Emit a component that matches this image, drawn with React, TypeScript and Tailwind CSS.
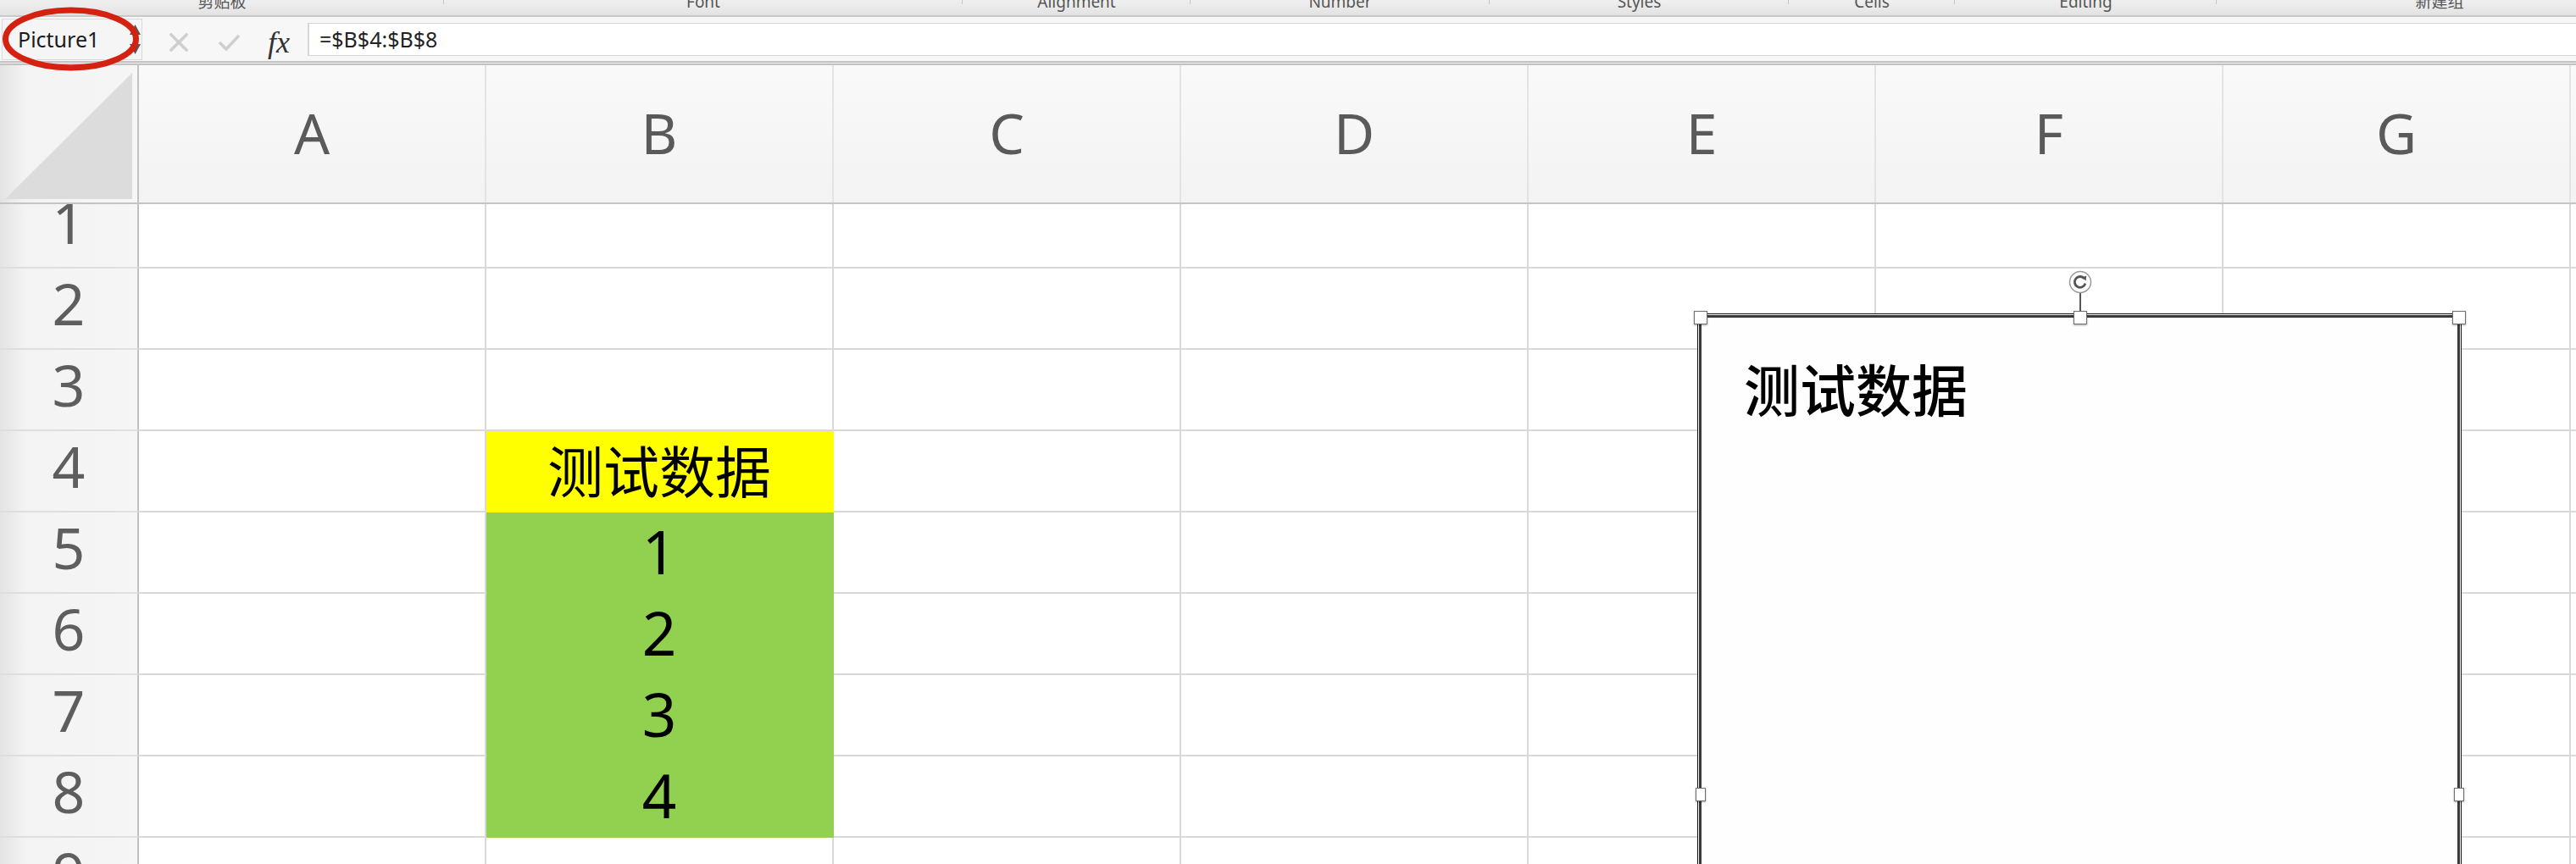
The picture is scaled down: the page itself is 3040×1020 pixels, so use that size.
import React from 'react';

const SANS = "font-['Noto_Sans','Noto_Sans_CJK_SC',sans-serif]";

const RIBBON_GROUPS = [
  { label: '剪贴板', width: 'w-[524px]' },
  { label: 'Font', width: 'w-[612px]' },
  { label: 'Alignment', width: 'w-[269px]' },
  { label: 'Number', width: 'w-[353px]' },
  { label: 'Styles', width: 'w-[353px]' },
  { label: 'Cells', width: 'w-[196px]' },
  { label: 'Editing', width: 'w-[309px]' },
  { label: '新建组', width: 'w-[526px]' },
];

const COLS = ['A', 'B', 'C', 'D', 'E', 'F', 'G', 'H'];

type Fill = { bg: string; text: string; size: string };

// only column B carries data
const CELLS: Record<number, Fill> = {
  4: { bg: 'bg-[#ffff00] border-[#ffff00]', text: '测试数据', size: 'text-[66px]' },
  5: { bg: 'bg-[#92d050] border-[#92d050] pb-[4px]', text: '1', size: 'text-[71px]' },
  6: { bg: 'bg-[#92d050] border-[#92d050] pb-[4px]', text: '2', size: 'text-[71px]' },
  7: { bg: 'bg-[#92d050] border-[#92d050] pb-[4px]', text: '3', size: 'text-[71px]' },
  8: { bg: 'bg-[#92d050] border-[#92d050] pb-[4px]', text: '4', size: 'text-[71px]' },
};

function Ribbon() {
  return (
    <div className="flex h-[18px] overflow-hidden bg-[linear-gradient(#efefef,#e3e3e3)]">
      {RIBBON_GROUPS.map((g, i) => (
        <div key={g.label} className={`relative flex shrink-0 justify-center ${g.width}`}>
          <span className="-mt-[7px] text-[19px] leading-[19px] text-[#555]">{g.label}</span>
          {i < RIBBON_GROUPS.length - 1 && (
            <span className="absolute right-0 top-0 h-[5px] w-px bg-[#c4c4c4]" />
          )}
        </div>
      ))}
    </div>
  );
}

function FormulaBar() {
  return (
    <div className="relative">
      <div className="h-[2px] bg-[#c9c9c9]" />
      <div className="flex h-[52px] items-start bg-[#f7f7f7]">
        <div className="ml-[2px] mt-[2px] flex h-[49px] w-[166px] shrink-0 items-center border border-[#dadada] bg-[#f5f5f5]">
          <span className="pl-[18px] text-[25px] leading-none text-[#1c1c1c]">Picture1</span>
          <svg className="ml-auto mr-[1px]" width="13" height="36" viewBox="0 0 13 36">
            <path d="M6.5 0 L13 12 L0 12 Z" fill="#555" />
            <path d="M0 23 L13 23 L6.5 35 Z" fill="#555" />
          </svg>
        </div>
        <svg className="ml-[32px] mt-[19px] shrink-0" width="22" height="22" viewBox="0 0 22 22">
          <path d="M2 2 L20 20 M20 2 L2 20" stroke="#cfcfcf" strokeWidth="3.5" strokeLinecap="square" />
        </svg>
        <svg className="ml-[35px] mt-[19px] shrink-0" width="27" height="22" viewBox="0 0 27 22">
          <path d="M2 11 L10 19 L25 3" stroke="#cfcfcf" strokeWidth="3.5" fill="none" />
        </svg>
        <span className="ml-[32px] mt-[10px] w-[28px] shrink-0 font-['Liberation_Serif',serif] text-[36px] italic leading-[40px] text-[#333]">
          fx
        </span>
        <div className="ml-[19px] mt-[7px] flex h-[39px] flex-1 items-center border-y border-l-2 border-[#d6d6d6] bg-white pl-[12px]">
          <span className="text-[25px] leading-none text-[#222]">=$B$4:$B$8</span>
        </div>
      </div>
      <div className="h-[5px] border-y-2 border-[#c3c3c3] bg-[#ececec]" />
      {/* red ellipse round the name box, centred on y=46 of the page */}
      <svg className="absolute left-0 top-[-12px]" width="172" height="84" viewBox="0 0 172 84">
        <ellipse cx="83.5" cy="40" rx="77" ry="34" fill="none" stroke="#d5210f" strokeWidth="7" />
      </svg>
    </div>
  );
}

function HeaderRow() {
  return (
    <div className="flex h-[164px] border-b-2 border-[#c4c4c4]">
      <div className="flex w-[164px] shrink-0 items-end justify-end border-r-2 border-[#c2c2c2] bg-[linear-gradient(to_right,#e3e3e3,#f3f3f3_18%,#f6f6f6)] pb-[3px] pr-[4px]">
        <svg width="152" height="150" viewBox="0 0 152 150">
          <path d="M0 149 L150 0 L150 149 Z" fill="#dcdcdc" />
        </svg>
      </div>
      {COLS.map((c) => (
        <div
          key={c}
          className="flex w-[410px] shrink-0 items-center justify-center border-r-2 border-[#e3e3e3] bg-[linear-gradient(#f9f9f9,#f3f3f3)] pb-[5px]"
        >
          <span className="text-[66px] leading-none text-[#5a5a5a]">{c}</span>
        </div>
      ))}
    </div>
  );
}

function RowHead({ n }: { n: number }) {
  return (
    <div className="flex w-[164px] shrink-0 flex-col justify-end overflow-hidden border-b-2 border-r-2 border-b-[#dedede] border-r-[#c2c2c2] bg-[linear-gradient(to_right,#e3e3e3,#f3f3f3_18%,#f6f6f6)]">
      <div className="flex h-[94px] shrink-0 items-center justify-center pb-[12px]">
        <span className="text-[68px] leading-none text-[#5e5e5e]">{n}</span>
      </div>
    </div>
  );
}

function Row({ n }: { n: number }) {
  const height = n === 1 ? 'h-[76px]' : 'h-[96px]';
  return (
    <div className={`flex shrink-0 ${height}`}>
      <RowHead n={n} />
      {COLS.map((c) => {
        const fill = c === 'B' ? CELLS[n] : undefined;
        return (
          <div
            key={c}
            className={`flex w-[410px] shrink-0 items-center justify-center border-b-2 border-r-2 ${
              fill ? fill.bg : 'border-[#d9d9d9] bg-white'
            }`}
          >
            {fill && <span className={`${fill.size} leading-none text-black`}>{fill.text}</span>}
          </div>
        );
      })}
    </div>
  );
}

function Handle({ className }: { className: string }) {
  return (
    <div
      className={`absolute -translate-x-1/2 -translate-y-1/2 border border-[#6f6f6f] bg-white shadow-[0_1px_2px_rgba(0,0,0,0.35)] ${className}`}
    />
  );
}

function PictureBox() {
  return (
    <>
      <div className="absolute left-[2005px] top-[372px] h-[700px] w-[898px] border-[3px] border-[#383838] bg-[#fefefe] shadow-[0_0_0_1px_#ffffff,0_0_0_2px_#111111]">
        <div className="pl-[50px] pt-[52px] text-[66px] font-medium leading-none text-black">测试数据</div>
      </div>
      {/* rotate handle */}
      <div className="absolute left-[2454px] top-[345px] h-[24px] w-[2px] bg-[#555]" />
      <svg className="absolute left-[2441px] top-[319px]" width="28" height="28" viewBox="0 0 28 28">
        <circle cx="14" cy="14" r="12.5" fill="#fff" stroke="#999" strokeWidth="1.5" />
        <path d="M18.8 10 A6.4 6.4 0 1 0 19.9 15.6" fill="none" stroke="#555" strokeWidth="2.8" />
        <path d="M15.6 8.2 L21.2 6.8 L20.6 12.4 Z" fill="#555" />
      </svg>
      <Handle className="left-[2007px] top-[375px] h-[16px] w-[16px]" />
      <Handle className="left-[2455px] top-[375px] h-[16px] w-[16px]" />
      <Handle className="left-[2902px] top-[375px] h-[16px] w-[16px]" />
      <Handle className="left-[2007px] top-[938px] h-[16px] w-[12px]" />
      <Handle className="left-[2902px] top-[938px] h-[16px] w-[12px]" />
    </>
  );
}

export default function App() {
  return (
    <div className={`relative h-[1020px] w-[3040px] overflow-hidden bg-white ${SANS}`}>
      <Ribbon />
      <FormulaBar />
      <div className="flex flex-col">
        <HeaderRow />
        {[1, 2, 3, 4, 5, 6, 7, 8, 9].map((n) => (
          <Row key={n} n={n} />
        ))}
      </div>
      <PictureBox />
    </div>
  );
}
